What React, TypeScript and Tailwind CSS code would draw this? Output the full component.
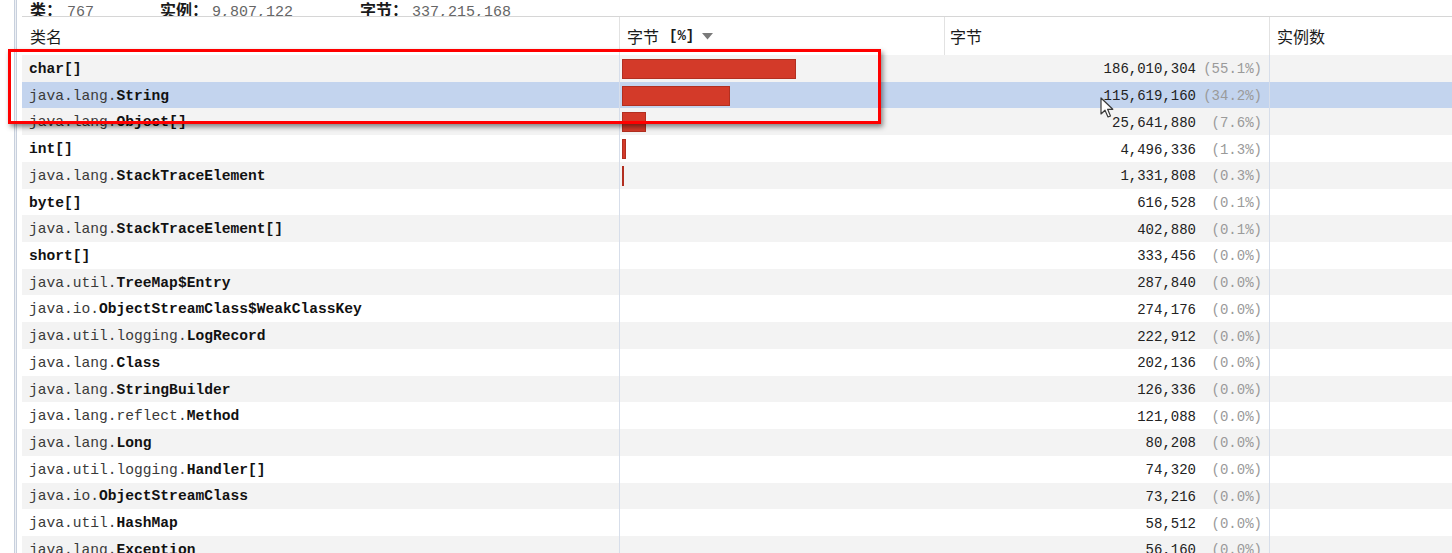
const rows = [
  { pkg: "", cls: "char[]", bytes: "186,010,304", pct: 55.1, inst: "4,593,203" },
  { pkg: "java.lang.", cls: "String", bytes: "115,619,160", pct: 34.2, inst: "4,817,465" },
  { pkg: "java.lang.", cls: "Object[]", bytes: "25,641,880", pct: 7.6, inst: "301,412" },
  { pkg: "", cls: "int[]", bytes: "4,496,336", pct: 1.3, inst: "18,207" },
  { pkg: "java.lang.", cls: "StackTraceElement", bytes: "1,331,808", pct: 0.3, inst: "41,619" },
  { pkg: "", cls: "byte[]", bytes: "616,528", pct: 0.1, inst: "3,158" },
  { pkg: "java.lang.", cls: "StackTraceElement[]", bytes: "402,880", pct: 0.1, inst: "2,072" },
  { pkg: "", cls: "short[]", bytes: "333,456", pct: 0.0, inst: "1,390" },
  { pkg: "java.util.", cls: "TreeMap$Entry", bytes: "287,840", pct: 0.0, inst: "7,196" },
  { pkg: "java.io.", cls: "ObjectStreamClass$WeakClassKey", bytes: "274,176", pct: 0.0, inst: "8,568" },
  { pkg: "java.util.logging.", cls: "LogRecord", bytes: "222,912", pct: 0.0, inst: "2,072" },
  { pkg: "java.lang.", cls: "Class", bytes: "202,136", pct: 0.0, inst: "1,789" },
  { pkg: "java.lang.", cls: "StringBuilder", bytes: "126,336", pct: 0.0, inst: "5,264" },
  { pkg: "java.lang.reflect.", cls: "Method", bytes: "121,088", pct: 0.0, inst: "1,376" },
  { pkg: "java.lang.", cls: "Long", bytes: "80,208", pct: 0.0, inst: "3,342" },
  { pkg: "java.util.logging.", cls: "Handler[]", bytes: "74,320", pct: 0.0, inst: "2,072" },
  { pkg: "java.io.", cls: "ObjectStreamClass", bytes: "73,216", pct: 0.0, inst: "572" },
  { pkg: "java.util.", cls: "HashMap", bytes: "58,512", pct: 0.0, inst: "1,219" },
  { pkg: "java.lang.", cls: "Exception", bytes: "56,160", pct: 0.0, inst: "1,755" },
];

const mono = "font-['Liberation_Mono',monospace]";
const cjk = "font-['Noto_Sans_CJK_SC','Noto_Sans',sans-serif]";

function SortArrow() {
  return (
    <svg width="11" height="7" viewBox="0 0 11 7" className="ml-2">
      <path d="M0 0 H11 L5.5 6.5 Z" fill="#7a7a7a" />
    </svg>
  );
}

function Cursor() {
  return (
    <svg width="14" height="22" viewBox="0 0 14 22" className="absolute left-[1100px] top-[97px]">
      <path
        d="M1 1 L1 17 L5 13.2 L8 20 L10.5 19 L7.6 12.3 L12.8 12.3 Z"
        fill="#fff"
        stroke="#3a3a3a"
        strokeWidth="1.2"
        strokeLinejoin="round"
      />
    </svg>
  );
}

export default function App() {
  return (
    <div className="relative h-[553px] w-[1452px] overflow-hidden bg-white text-[#1a1a1a]">
      <div className="flex h-full">
        <div className="w-[14px] shrink-0" />
        <div className="w-[3px] shrink-0 border-x border-[#c8d0dd] bg-[#eef1f5]" />
        <div className="w-[5px] shrink-0" />

        <div className="flex min-w-0 flex-1 flex-col">
          {/* summary, scrolled half out of view */}
          <div className={`flex h-[17px] shrink-0 items-end overflow-hidden border-b border-[#d6d6d6] text-[16px] leading-[20px] ${cjk}`}>
            <div className="-mb-[7px] flex whitespace-nowrap">
              <span className="w-[138px] pl-[8px]">
                <b>类：</b>
                <span className={`ml-[5px] ${mono} text-[15px] text-[#666]`}>767</span>
              </span>
              <span className="w-[200px]">
                <b>实例：</b>
                <span className={`ml-[4px] ${mono} text-[15px] text-[#666]`}>9,807,122</span>
              </span>
              <span>
                <b>字节：</b>
                <span className={`ml-[4px] ${mono} text-[15px] text-[#666]`}>337,215,168</span>
              </span>
            </div>
          </div>

          {/* header */}
          <div className={`flex h-[38px] shrink-0 items-center text-[16px] ${cjk}`}>
            <div className="flex h-full w-[598px] shrink-0 items-center border-r border-[#e2e2e2] pl-[8px]">类名</div>
            <div className="flex h-full w-[325px] shrink-0 items-center border-r border-[#e2e2e2] pl-[7px]">
              字节
              <span className={`ml-[10px] ${mono} text-[14px] font-bold`}>[%]</span>
              <SortArrow />
            </div>
            <div className="flex h-full w-[325px] shrink-0 items-center border-r border-[#e2e2e2] pl-[5px]">字节</div>
            <div className="flex h-full w-[349px] shrink-0 items-center pl-[7px]">实例数</div>
          </div>

          {/* rows */}
          <div className={`flex flex-col ${mono} text-[14.6px]`}>
            {rows.map((r, i) => {
              const bg = i === 1 ? "bg-[#c3d4ee]" : i % 2 === 0 ? "bg-[#f3f3f3]" : "bg-white";
              const barW = r.pct * 3.16;
              return (
                <div key={r.cls + i} className={`flex h-[26.72px] shrink-0 items-center ${bg}`}>
                  <div className="flex h-full w-[598px] shrink-0 items-center whitespace-nowrap border-r border-[#d7deea] pl-[7px] pt-[3px]">
                    <span className="text-[#3a3a3a]">{r.pkg}</span>
                    <span className="font-bold text-[#111]">{r.cls}</span>
                  </div>
                  <div className="flex h-full w-[325px] shrink-0 items-center pl-[2px] pt-[1px]">
                    {barW >= 0.9 && (
                      <div
                        className="h-[20px] border border-[#b22f20] bg-[#d33a29]"
                        style={{ width: Math.max(2, barW) }}
                      />
                    )}
                  </div>
                  <div className="flex h-full w-[325px] shrink-0 items-center justify-end border-r border-[#d7deea] pr-[7px] pt-[3px] text-[14px]">
                    <span className="text-[#222]">{r.bytes}</span>
                    <span className="w-[66px] text-right text-[#9a9a9a]">({r.pct.toFixed(1)}%)</span>
                  </div>
                  <div className="flex h-full w-[349px] shrink-0 items-center justify-end pr-[7px] pt-[3px] text-[14px]">
                    <span className="text-[#222]">{r.inst}</span>
                    <span className="w-[66px] text-right text-[#9a9a9a]">(47.0%)</span>
                  </div>
                </div>
              );
            })}
          </div>
        </div>
      </div>

      {/* red annotation box */}
      <div className="absolute left-[8px] top-[49px] h-[75px] w-[873px] border-[3px] border-[#ff0000] shadow-[2px_3px_5px_rgba(0,0,0,0.45)]" />

      <Cursor />
    </div>
  );
}
